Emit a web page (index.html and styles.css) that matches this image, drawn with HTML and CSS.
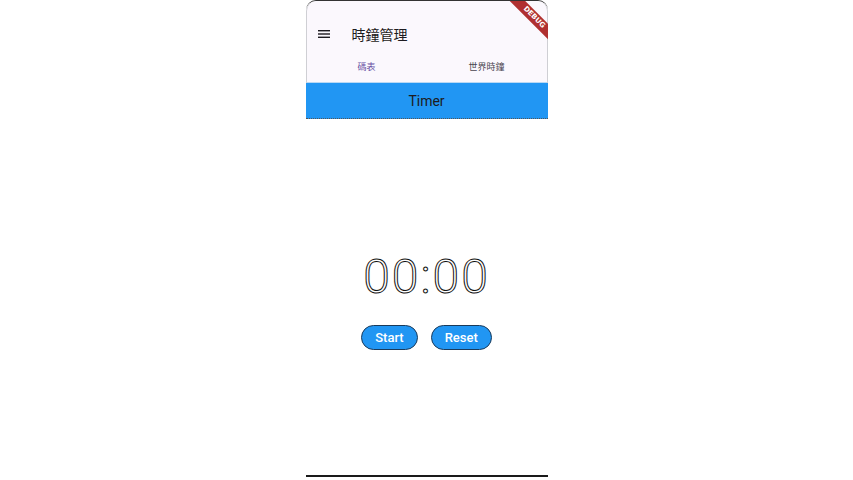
FILE: index.html
```html
<!DOCTYPE html>
<html>
<head>
<meta charset="utf-8">
<link rel="stylesheet" href="styles.css">
</head>
<body>
<div class="phone">
  <header class="appbar">
    <div class="toolbar">
      <svg class="menu" width="12" height="10" viewBox="0 0 12 10"><rect x="0" y="1" width="12" height="1.4" fill="#1d1b20"/><rect x="0" y="4.3" width="12" height="1.4" fill="#1d1b20"/><rect x="0" y="7.6" width="12" height="1.4" fill="#1d1b20"/></svg>
      <span class="title">時鐘管理</span>
    </div>
    <nav class="tabs">
      <span class="tab active">碼表</span>
      <span class="tab">世界時鐘</span>
    </nav>
  </header>
  <div class="timerbar">Timer</div>
  <main class="content">
    <div class="clock">00:00</div>
    <div class="buttons">
      <button class="btn">Start</button>
      <button class="btn">Reset</button>
    </div>
  </main>
  <div class="banner">DEBUG</div>
</div>
</body>
</html>
```

FILE: styles.css
```css
html, body {
  margin: 0;
  padding: 0;
  background: #ffffff;
}
body {
  font-family: Roboto, "Noto Sans CJK TC", sans-serif;
}
.phone {
  position: relative;
  width: 242px;
  height: 477px;
  margin: 0 auto;
  display: flex;
  flex-direction: column;
  overflow: hidden;
  border-radius: 10px 10px 0 0;
  border-top: 1px solid #333;
  box-sizing: border-box;
  border-bottom: 2px solid #1a1a1a;
}
.appbar {
  background: #fbf8fd;
  border-left: 1px solid #cfcfd4;
  border-right: 1px solid #cfcfd4;
  border-radius: 10px 10px 0 0;
  display: flex;
  flex-direction: column;
}
.toolbar {
  height: 50px;
  display: flex;
  align-items: center;
  padding: 16px 0 0 11px;
  box-sizing: border-box;
}
.menu {
  display: block;
}
.title {
  margin-left: 22px;
  font-size: 14px;
  color: #1d1b20;
  font-family: "Noto Sans CJK TC", sans-serif;
}
.tabs {
  height: 31px;
  display: flex;
  border-bottom: 1px solid #b9d9f5;
}
.tab {
  flex: 1;
  display: flex;
  align-items: center;
  justify-content: center;
  font-size: 9px;
  color: #49454f;
  font-family: "Noto Sans CJK TC", sans-serif;
}
.tab.active {
  color: #6750a4;
}
.timerbar {
  height: 36px;
  background: #2196f3;
  display: flex;
  align-items: center;
  justify-content: center;
  font-size: 14px;
  color: #1d1b20;
  border-bottom: 1px dotted #555;
  box-sizing: border-box;
}
.content {
  flex: 1;
  display: flex;
  flex-direction: column;
  align-items: center;
  justify-content: center;
}
.clock {
  font-family: Roboto, sans-serif;
  font-weight: 300;
  font-size: 48px;
  line-height: 56px;
  color: #ffffff;
  -webkit-text-stroke: 1px #111;
  letter-spacing: 2px;
  margin-top: 4px;
}
.buttons {
  display: flex;
  gap: 13px;
  margin-top: 20px;
}
.btn {
  height: 25px;
  padding: 0 13px;
  border-radius: 13px;
  border: 1px solid #1a3a5a;
  background: #2196f3;
  color: #ffffff;
  font-family: Roboto, sans-serif;
  font-weight: 500;
  font-size: 13px;
  line-height: 23px;
}
.banner {
  position: absolute;
  top: 11px;
  right: -18px;
  width: 64px;
  height: 11px;
  background: #b03030;
  color: #ffffff;
  font-family: "DejaVu Sans", sans-serif;
  font-weight: bold;
  font-size: 7px;
  line-height: 11px;
  text-align: center;
  transform: rotate(45deg);
}
```
